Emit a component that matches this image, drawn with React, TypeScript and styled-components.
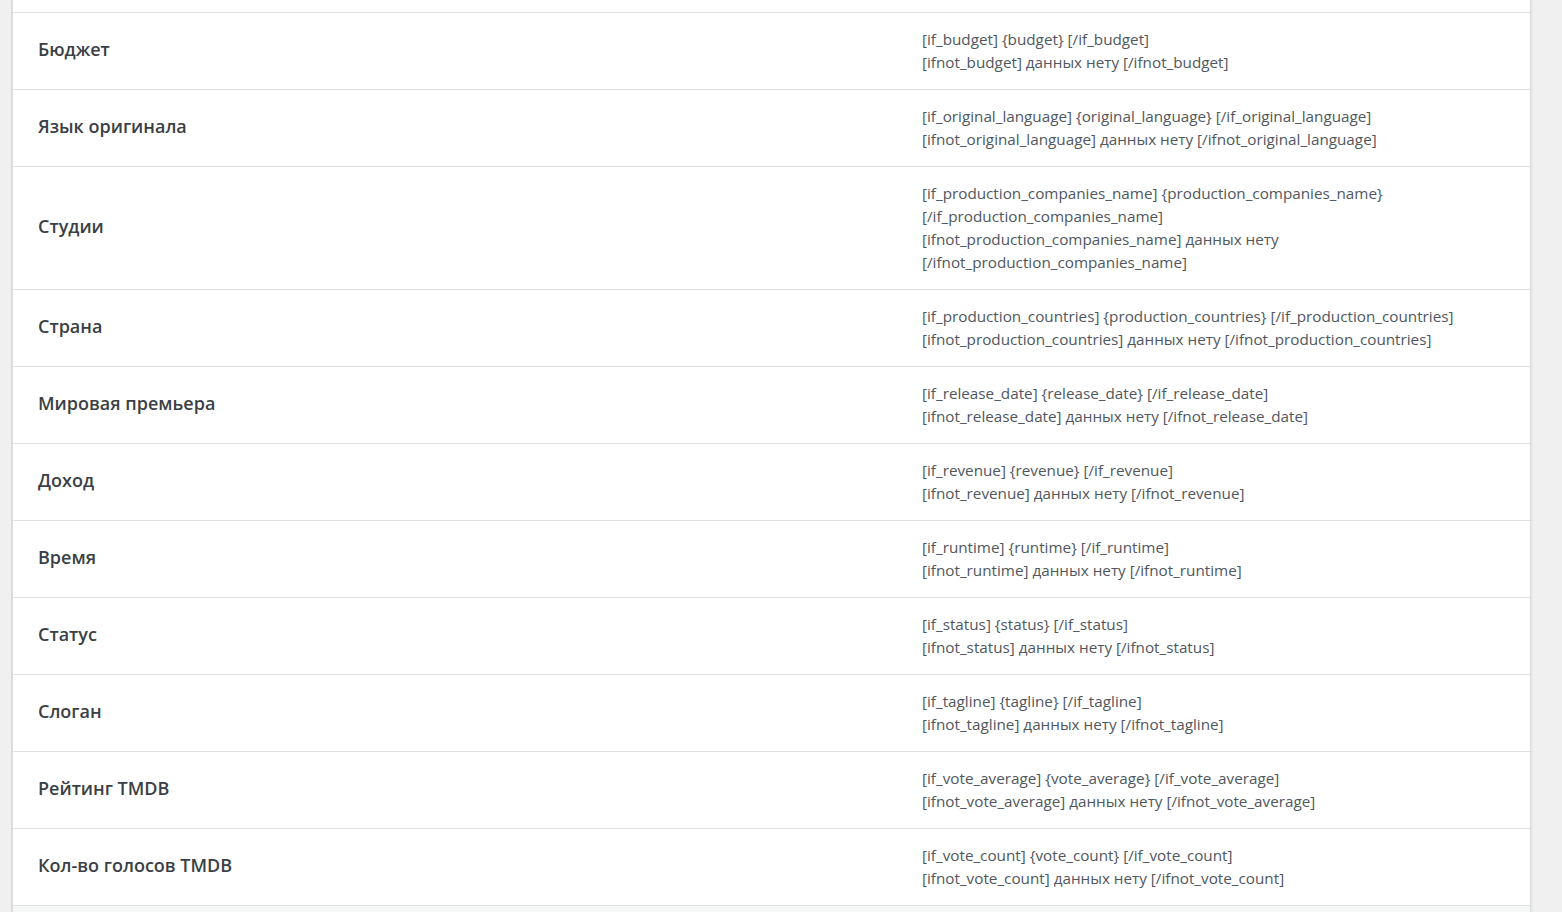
import React from "react";
import styled, { createGlobalStyle } from "styled-components";

const GlobalStyle = createGlobalStyle`
  html, body {
    margin: 0;
    padding: 0;
    background: #f0f0f1;
    height: 100%;
    overflow: hidden;
  }
  body {
    font-family: "Segoe UI", "Open Sans", "Noto Sans", sans-serif;
  }
`;

const Page = styled.div`
  height: 912px;
  padding-left: 11px;
  padding-right: 31px;
  overflow: hidden;
`;

const Panel = styled.div`
  background: #fff;
  border-left: 2px solid #dcdcde;
  border-right: 1px solid #dcdcde;
  box-shadow: 1px 0 2px rgba(0, 0, 0, 0.06);
`;

const StubRow = styled.div`
  height: 12px;
  border-bottom: 1px solid #e0e0e0;
`;

const Row = styled.div<{ $muted?: boolean }>`
  display: grid;
  grid-template-columns: 909px 1fr;
  align-items: center;
  border-bottom: 1px solid #e0e0e0;
  background: ${({ $muted }) => ($muted ? "#f6f7f7" : "#fff")};
`;

const Label = styled.div`
  padding-left: 25px;
  padding-bottom: 5px;
  font-size: 18px;
  font-weight: 600;
  color: #3a3f45;
`;

const Value = styled.div`
  padding: 15px 0;
  font-size: 15.25px;
  line-height: 23px;
  color: #50575e;
`;

const Line = styled.div`
  white-space: nowrap;
`;

const rows: { label: string; lines: string[] }[] = [
  {
    label: "Бюджет",
    lines: ["[if_budget] {budget} [/if_budget]", "[ifnot_budget] данных нету [/ifnot_budget]"],
  },
  {
    label: "Язык оригинала",
    lines: [
      "[if_original_language] {original_language} [/if_original_language]",
      "[ifnot_original_language] данных нету [/ifnot_original_language]",
    ],
  },
  {
    label: "Студии",
    lines: [
      "[if_production_companies_name] {production_companies_name}",
      "[/if_production_companies_name]",
      "[ifnot_production_companies_name] данных нету",
      "[/ifnot_production_companies_name]",
    ],
  },
  {
    label: "Страна",
    lines: [
      "[if_production_countries] {production_countries} [/if_production_countries]",
      "[ifnot_production_countries] данных нету [/ifnot_production_countries]",
    ],
  },
  {
    label: "Мировая премьера",
    lines: [
      "[if_release_date] {release_date} [/if_release_date]",
      "[ifnot_release_date] данных нету [/ifnot_release_date]",
    ],
  },
  {
    label: "Доход",
    lines: ["[if_revenue] {revenue} [/if_revenue]", "[ifnot_revenue] данных нету [/ifnot_revenue]"],
  },
  {
    label: "Время",
    lines: ["[if_runtime] {runtime} [/if_runtime]", "[ifnot_runtime] данных нету [/ifnot_runtime]"],
  },
  {
    label: "Статус",
    lines: ["[if_status] {status} [/if_status]", "[ifnot_status] данных нету [/ifnot_status]"],
  },
  {
    label: "Слоган",
    lines: ["[if_tagline] {tagline} [/if_tagline]", "[ifnot_tagline] данных нету [/ifnot_tagline]"],
  },
  {
    label: "Рейтинг TMDB",
    lines: [
      "[if_vote_average] {vote_average} [/if_vote_average]",
      "[ifnot_vote_average] данных нету [/ifnot_vote_average]",
    ],
  },
  {
    label: "Кол-во голосов TMDB",
    lines: [
      "[if_vote_count] {vote_count} [/if_vote_count]",
      "[ifnot_vote_count] данных нету [/ifnot_vote_count]",
    ],
  },
];

const App: React.FC = () => {
  return (
    <>
      <GlobalStyle />
      <Page>
        <Panel>
          <StubRow />
          {rows.map((r) => (
            <Row key={r.label}>
              <Label>{r.label}</Label>
              <Value>
                {r.lines.map((l) => (
                  <Line key={l}>{l}</Line>
                ))}
              </Value>
            </Row>
          ))}
          <Row $muted>
            <Label>&nbsp;</Label>
            <Value>&nbsp;</Value>
          </Row>
        </Panel>
      </Page>
    </>
  );
};

export default App;
